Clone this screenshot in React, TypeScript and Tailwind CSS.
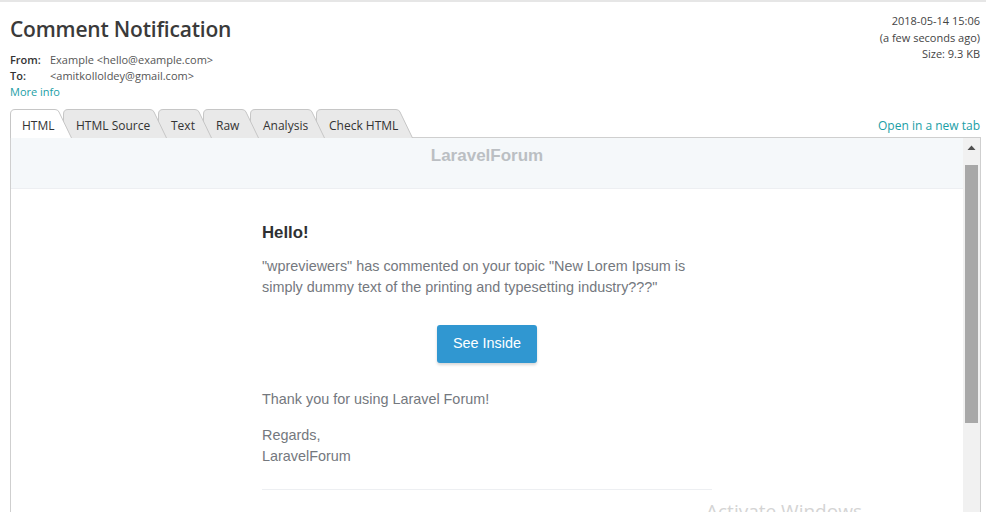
import React from "react";

const tabs = [
  { label: "HTML", w: 62, active: true },
  { label: "HTML Source", w: 104 },
  { label: "Text", w: 54 },
  { label: "Raw", w: 56 },
  { label: "Analysis", w: 75 },
  { label: "Check HTML", w: 97 },
];

function Tab({ label, w, active, first, z }: { label: string; w: number; active?: boolean; first?: boolean; z: number }) {
  const h = 29;
  const s = 14;
  const d = `M0.5 ${h} L0.5 5 Q0.5 0.5 5 0.5 L${w - s - 3} 0.5 Q${w - s} 0.5 ${w - s + 1} 3 L${w - 0.5} ${h}`;
  return (
    <div
      className={`relative h-[29px] shrink-0 ${first ? "" : "-ml-[9px]"}`}
      style={{ width: w, zIndex: active ? 50 : z }}
    >
      <svg className="absolute inset-0" width={w} height={h} viewBox={`0 0 ${w} ${h}`}>
        <path d={d + " Z"} fill={active ? "#ffffff" : "#e9e9e9"} stroke="none" />
        <path d={d} fill="none" stroke="#c6c6c6" strokeWidth="1" />
      </svg>
      <span className={`relative block ${first ? "pl-[12px]" : "pl-[13px]"} pt-[10px] text-[12px] leading-[14px] text-[#333]`}>{label}</span>
    </div>
  );
}

export default function App() {
  return (
    <div className="relative h-[512px] w-[986px] overflow-hidden bg-white font-['Open_Sans',sans-serif] text-[#333]">
      <div className="h-[2px] bg-[#e6e6e6]" />
      <div className="flex justify-between pl-[10px] pr-[6px]">
        <div>
          <h1 className="mt-[12px] text-[21px] leading-[30px] font-semibold tracking-[-0.2px] text-[#3a3a3a]">Comment Notification</h1>
          <div className="mt-[8px] text-[11px] leading-[16px]">
            <div className="flex">
              <span className="w-[40px] font-semibold">From:</span>
              <span className="text-[#555]">Example &lt;hello@example.com&gt;</span>
            </div>
            <div className="flex">
              <span className="w-[40px] font-semibold">To:</span>
              <span className="text-[#555]">&lt;amitkolloldey@gmail.com&gt;</span>
            </div>
            <div className="text-[#1a9ea6]">More info</div>
          </div>
        </div>
        <div className="mt-[11px] text-right text-[11px] leading-[16.5px] text-[#444]">
          <div>2018-05-14 15:06</div>
          <div>(a few seconds ago)</div>
          <div>Size: 9.3 KB</div>
        </div>
      </div>

      <div className="mt-[9px] flex items-end justify-between pl-[10px] pr-[6px]">
        <div className="relative z-10 -mb-px flex">
          {tabs.map((t, i) => (
            <Tab key={t.label} label={t.label} w={t.w} active={t.active} first={i === 0} z={20 - i} />
          ))}
        </div>
        <div className="pb-[4px] text-[12px] leading-[14px] text-[#1a9ea6]">Open in a new tab</div>
      </div>

      <div className="ml-[10px] mr-[5px] flex h-[380px] border border-[#cfcfcf]">
        <div className="relative flex-1 overflow-hidden font-['Liberation_Sans',Arial,sans-serif]">
          <div className="flex h-[51px] justify-center border-b border-[#edeff2] bg-[#f5f8fa] pt-[7px]">
            <span className="text-[17px] leading-[22px] font-bold text-[#bbbfc3]">LaravelForum</span>
          </div>
          <div className="mx-auto w-[450px] pt-[35px]">
            <h2 className="text-[16.8px] leading-[18px] font-bold text-[#2f3133]">Hello!</h2>
            <p className="mt-[14px] text-[14.4px] leading-[21px] text-[#74787e]">
              "wpreviewers" has commented on your topic "New Lorem Ipsum is simply dummy text of the printing and typesetting industry???"
            </p>
            <div className="mt-[27px] flex justify-center">
              <div className="flex h-[38px] w-[100px] items-center justify-center rounded-[3px] bg-[#3097d1] text-[14.4px] text-white shadow-[0_2px_3px_rgba(0,0,0,0.16)]">
                See Inside
              </div>
            </div>
            <p className="mt-[26px] text-[14.4px] leading-[21px] text-[#74787e]">Thank you for using Laravel Forum!</p>
            <p className="mt-[15px] text-[14.4px] leading-[21px] text-[#74787e]">
              Regards,
              <br />
              LaravelForum
            </p>
            <div className="mt-[22px] h-px bg-[#edeff2]" />
          </div>
        </div>
        <div className="flex w-[17px] shrink-0 flex-col items-center bg-[#f1f1f1]">
          <svg width="17" height="17" viewBox="0 0 17 17" className="mt-[1px]">
            <path d="M4.5 11 L8.5 6.5 L12.5 11 Z" fill="#505050" />
          </svg>
          <div className="mt-[9px] h-[258px] w-[13px] bg-[#a8a8a8]" />
        </div>
      </div>

      <div className="pointer-events-none absolute left-[706px] top-[499px] font-['Open_Sans',sans-serif] text-[19px] leading-[24px] text-[#d4d4d4]">
        Activate Windows
      </div>
    </div>
  );
}
